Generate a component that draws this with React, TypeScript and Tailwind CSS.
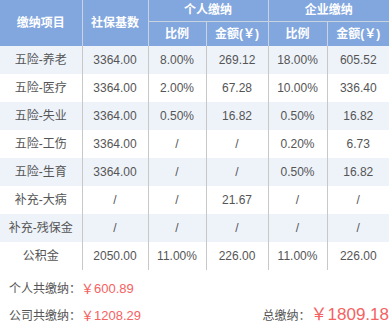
import React from "react";

type Row = {
  name: string;
  base: string;
  pRate: string;
  pAmt: string;
  cRate: string;
  cAmt: string;
};

const rows: Row[] = [
  { name: "五险-养老", base: "3364.00", pRate: "8.00%", pAmt: "269.12", cRate: "18.00%", cAmt: "605.52" },
  { name: "五险-医疗", base: "3364.00", pRate: "2.00%", pAmt: "67.28", cRate: "10.00%", cAmt: "336.40" },
  { name: "五险-失业", base: "3364.00", pRate: "0.50%", pAmt: "16.82", cRate: "0.50%", cAmt: "16.82" },
  { name: "五险-工伤", base: "3364.00", pRate: "/", pAmt: "/", cRate: "0.20%", cAmt: "6.73" },
  { name: "五险-生育", base: "3364.00", pRate: "/", pAmt: "/", cRate: "0.50%", cAmt: "16.82" },
  { name: "补充-大病", base: "/", pRate: "/", pAmt: "21.67", cRate: "/", cAmt: "/" },
  { name: "补充-残保金", base: "/", pRate: "/", pAmt: "/", cRate: "/", cAmt: "/" },
  { name: "公积金", base: "2050.00", pRate: "11.00%", pAmt: "226.00", cRate: "11.00%", cAmt: "226.00" },
];

const font = { fontFamily: '"Liberation Sans", "Noto Sans CJK SC", sans-serif' };

export default function App() {
  const th = "border-l border-[#c9d3e0] font-bold text-[12px] text-white";
  const td = "border-l border-[#c8c8c8] text-[12px] text-[#555]";

  return (
    <div className="w-[389px] h-[329px] bg-white overflow-hidden" style={font}>
      <table className="w-[389px] table-fixed border-collapse text-center">
        <colgroup>
          <col className="w-[82px]" />
          <col className="w-[66px]" />
          <col className="w-[58px]" />
          <col className="w-[62px]" />
          <col className="w-[59px]" />
          <col className="w-[62px]" />
        </colgroup>
        <thead className="bg-[#82a7de]">
          <tr className="h-[21px]">
            <th rowSpan={2} className="font-bold text-[12px] text-white">缴纳项目</th>
            <th rowSpan={2} className={th}>社保基数</th>
            <th colSpan={2} className={`${th} border-b`}>个人缴纳</th>
            <th colSpan={2} className={`${th} border-b`}>企业缴纳</th>
          </tr>
          <tr className="h-[25px]">
            <th className={th}>比例</th>
            <th className={th}>金额(￥)</th>
            <th className={th}>比例</th>
            <th className={th}>金额(￥)</th>
          </tr>
        </thead>
        <tbody>
          {rows.map((r, i) => (
            <tr key={r.name} className={`h-[28px] ${i % 2 === 0 ? "bg-[#eef3fa]" : "bg-white"}`}>
              <td className="text-[12px] text-[#555]">{r.name}</td>
              <td className={td}>{r.base}</td>
              <td className={td}>{r.pRate}</td>
              <td className={td}>{r.pAmt}</td>
              <td className={td}>{r.cRate}</td>
              <td className={td}>{r.cAmt}</td>
            </tr>
          ))}
        </tbody>
      </table>

      <div className="flex items-end justify-between pl-[9px] pt-[9px]">
        <div className="flex flex-col gap-[7px] text-[12px] text-[#555]">
          <div>
            个人共缴纳：<span className="text-[13px] text-[#f56262]">￥600.89</span>
          </div>
          <div>
            公司共缴纳：<span className="text-[13px] text-[#f56262]">￥1208.29</span>
          </div>
        </div>
        <div className="whitespace-nowrap text-[12px] text-[#555]">
          总缴纳：<span className="text-[17px] leading-none text-[#f56262]">￥1809.18</span>
        </div>
      </div>
    </div>
  );
}
